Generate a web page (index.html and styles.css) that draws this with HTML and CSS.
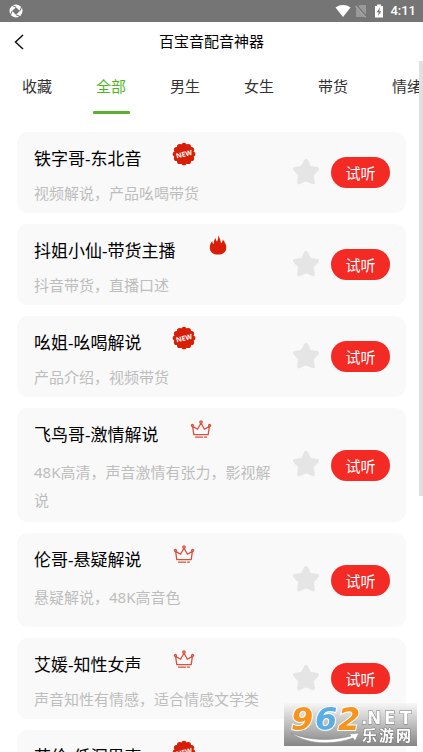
FILE: index.html
```html
<!DOCTYPE html>
<html lang="zh-CN">
<head>
<meta charset="utf-8">
<meta name="viewport" content="width=device-width, initial-scale=1">
<title>百宝音配音神器</title>
<link rel="stylesheet" href="styles.css">
</head>
<body>
<svg class="defs" aria-hidden="true">
  <symbol id="star" viewBox="0 1 28 28"><path d="M14 3 L17.4 9.7 25 11 19.8 16.6 20.8 24.3 14 21.2 7.2 24.3 8.2 16.6 3 11 10.6 9.7Z" fill="#e5e5e5" stroke="#e5e5e5" stroke-width="4" stroke-linejoin="round"/></symbol>
  <symbol id="new" viewBox="0 0 24 24">
    <g fill="#d81e06"><circle cx="12" cy="12" r="10"/><circle cx="12" cy="3.3" r="2.6"/><circle cx="16.4" cy="4.5" r="2.6"/><circle cx="19.5" cy="7.6" r="2.6"/><circle cx="20.7" cy="12" r="2.6"/><circle cx="19.5" cy="16.4" r="2.6"/><circle cx="16.4" cy="19.5" r="2.6"/><circle cx="12" cy="20.7" r="2.6"/><circle cx="7.6" cy="19.5" r="2.6"/><circle cx="4.5" cy="16.4" r="2.6"/><circle cx="3.3" cy="12" r="2.6"/><circle cx="4.5" cy="7.6" r="2.6"/><circle cx="7.6" cy="4.5" r="2.6"/></g>
    <text x="12" y="14.7" transform="rotate(-14 12 12)" text-anchor="middle" class="new-text">NEW</text>
  </symbol>
  <symbol id="fire" viewBox="0 0 24 24"><path d="M12.2 1.5C13.6 4 14.8 6.4 15 9.4 15.9 8.600 16.600 7.100 16.700 5.500 19.100 8 20.300 10.800 20.300 13.400 20.300 18 17 20.500 12 20.500S3.800 18 3.800 13.400C3.800 11 4.700 8.800 6.200 7 6.400 8.500 6.900 9.500 7.700 10.300 7.800 7.500 8.300 5.600 9.400 4.100 9.700 5.600 10.200 6.800 11 7.700 12 5.800 12.400 3.800 12.200 1.500Z" fill="#d81e06"/></symbol>
  <symbol id="crown" viewBox="0 0 24 24"><g fill="none" stroke="#d9503f" stroke-width="1.300" stroke-linecap="round" stroke-linejoin="round"><path d="M4.800 16.600 3.600 8.400 8.600 11.200 12 5 15.400 11.200 20.400 8.400 19.200 16.600Z"/><circle cx="12" cy="4" r="1.200"/><circle cx="3.400" cy="7.400" r="1"/><circle cx="20.600" cy="7.400" r="1"/><path d="M6.500 19.200H13.500M15.500 19.200H17.500"/></g></symbol>
</svg>

<div class="status">
  <svg class="status-app" viewBox="0 0 14 14" aria-hidden="true"><circle cx="7" cy="7" r="6.500" fill="#fff"/><path d="M7 3.200 10.800 7 7 10.800 3.200 7Z" fill="#757575"/><path d="M7 3.200 3 1.500M10.800 7 12.500 3M7 10.800 11 12.500M3.200 7 1.500 11" stroke="#757575" stroke-width="1"/></svg>
  <svg class="status-wifi" viewBox="0 0 16 14" aria-hidden="true"><path d="M8 13 .5 3.500C4.800.200 11.200.200 15.500 3.500Z" fill="#fff"/></svg>
  <svg class="status-sim" viewBox="0 0 12 14" aria-hidden="true"><path d="M4.500 1H11V13H1V4.500Z" fill="#999"/><path d="M1 1.500 11.500 13" stroke="#757575" stroke-width="2.400"/><path d="M.5 2 10.800 13.300" stroke="#aaa" stroke-width="1.200"/></svg>
  <svg class="status-battery" viewBox="0 0 10 14" aria-hidden="true"><path d="M3 .5H7V2H9V13.500H1V2H3Z" fill="#fff"/><path d="M6 3.500 2.600 8.300H4.700L4 12 7.400 7.200H5.300Z" fill="#757575"/></svg>
  <time>4:11</time>
</div>

<header class="header">
  <button class="back" aria-label="返回"><svg viewBox="0 0 12 18" aria-hidden="true"><path d="M10 2 2.500 9 10 16" fill="none" stroke="#111" stroke-width="1.500"/></svg></button>
  <h1>百宝音配音神器</h1>
</header>

<div class="content">
  <nav class="tabs">
    <a href="#">收藏</a>
    <a href="#" class="active" aria-current="page">全部</a>
    <a href="#">男生</a>
    <a href="#">女生</a>
    <a href="#">带货</a>
    <a href="#">情绪</a>
  </nav>

  <main class="list">
    <article class="card">
      <div class="info"><div class="name"><h2>铁字哥-东北音</h2><svg class="badge"><use href="#new"/></svg></div><p>视频解说，产品吆喝带货</p></div>
      <button class="fav" aria-label="收藏"><svg><use href="#star"/></svg></button><button class="listen">试听</button>
    </article>
    <article class="card">
      <div class="info"><div class="name"><h2>抖姐小仙-带货主播</h2><svg class="badge"><use href="#fire"/></svg></div><p>抖音带货，直播口述</p></div>
      <button class="fav" aria-label="收藏"><svg><use href="#star"/></svg></button><button class="listen">试听</button>
    </article>
    <article class="card">
      <div class="info"><div class="name"><h2>吆姐-吆喝解说</h2><svg class="badge"><use href="#new"/></svg></div><p>产品介绍，视频带货</p></div>
      <button class="fav" aria-label="收藏"><svg><use href="#star"/></svg></button><button class="listen">试听</button>
    </article>
    <article class="card tall">
      <div class="info"><div class="name"><h2>飞鸟哥-激情解说</h2><svg class="badge"><use href="#crown"/></svg></div><p>48K高清，声音激情有张力，影视解说</p></div>
      <button class="fav" aria-label="收藏"><svg><use href="#star"/></svg></button><button class="listen">试听</button>
    </article>
    <article class="card tall">
      <div class="info"><div class="name"><h2>伦哥-悬疑解说</h2><svg class="badge"><use href="#crown"/></svg></div><p>悬疑解说，48K高音色</p></div>
      <button class="fav" aria-label="收藏"><svg><use href="#star"/></svg></button><button class="listen">试听</button>
    </article>
    <article class="card">
      <div class="info"><div class="name"><h2>艾媛-知性女声</h2><svg class="badge"><use href="#crown"/></svg></div><p>声音知性有情感，适合情感文学类</p></div>
      <button class="fav" aria-label="收藏"><svg><use href="#star"/></svg></button><button class="listen">试听</button>
    </article>
    <article class="card">
      <div class="info"><div class="name"><h2>艾伦-低沉男声</h2><svg class="badge"><use href="#new"/></svg></div><p>低沉男声</p></div>
      <button class="fav" aria-label="收藏"><svg><use href="#star"/></svg></button><button class="listen">试听</button>
    </article>
  </main>
  <div class="scrollbar"></div>
</div>

<div class="mark">
  <svg viewBox="0 0 133 43" role="img" aria-label="962.NET 乐游网">
    <g class="mark-num"><text x="7" y="27" fill="#f7941d">9</text><text x="31" y="27" fill="#5aaee6">6</text><text x="54" y="27" fill="#f7941d">2</text></g>
    <path d="M7 30C25 38 47 38 67 33L65 31 75 30 71 38 69 35C47 43 22 41 7 30Z" fill="#fff" stroke="#888" stroke-width=".6"/>
    <text class="mark-net" y="21"><tspan x="77">.</tspan><tspan x="83">N</tspan><tspan x="100">E</tspan><tspan x="116">T</tspan></text>
    <text class="mark-cn" y="38"><tspan x="78">乐</tspan><tspan x="95">游</tspan><tspan x="112">网</tspan></text>
  </svg>
</div>
</body>
</html>
```
FILE: styles.css
```css
* { box-sizing: border-box; }

body {
  margin: 0;
  height: 100vh;
  display: flex;
  flex-direction: column;
  overflow: hidden;
  background: #fff;
  color: #000;
  font-family: "Noto Sans", "Noto Sans CJK SC", sans-serif;
}

h1, h2, p { margin: 0; font-weight: 400; }
svg { display: block; }
button { border: 0; padding: 0; background: none; font-family: inherit; cursor: pointer; }

.defs { position: absolute; width: 0; height: 0; }

.status {
  flex: none;
  display: flex;
  align-items: center;
  height: 22px;
  padding: 0 7px 0 9px;
  background: #757575;
  color: #fff;
}
.status time { font: 500 13px/22px Roboto, sans-serif; margin-left: 6px; }
.status-app { width: 14px; height: 14px; margin-right: auto; }
.status-wifi { width: 16px; height: 14px; }
.status-sim { width: 12px; height: 14px; margin-left: 4px; }
.status-battery { width: 10px; height: 14px; margin-left: 7px; }

.header {
  flex: none;
  display: grid;
  grid-template-columns: 40px 1fr 40px;
  align-items: center;
  height: 39px;
}
.back { padding-left: 13px; }
.back svg { width: 12px; height: 18px; }
.header h1 { text-align: center; font-size: 15px; line-height: 39px; }

.content { position: relative; flex: 1; min-height: 0; overflow: hidden; }

.tabs { display: flex; height: 53px; overflow: hidden; }
.tabs a {
  flex: none;
  display: flex;
  flex-direction: column;
  align-items: center;
  width: 74px;
  color: #333;
  font-size: 15px;
  line-height: 50px;
  text-decoration: none;
}
.tabs .active { color: #4fb51f; }
.tabs .active::after { content: ""; width: 37px; height: 3px; border-radius: 1px; background: #5ab030; }

.list { display: flex; flex-direction: column; gap: 11px; padding: 18px 17px; }
.card {
  display: flex;
  align-items: center;
  min-height: 81px;
  padding: 0 16px 0 17px;
  border-radius: 11px;
  background: #f9f9f9;
}
.info { flex: 1; align-self: flex-start; padding: 14px 10px 8px 0; }
.name { display: flex; align-items: flex-start; gap: 31px; }
.name h2 { font-size: 17px; line-height: 26px; }
.badge { width: 24px; height: 24px; margin-top: -4px; }
.new-text { font: 700 7px "Open Sans", sans-serif; fill: #fff; }
.info p { margin-top: 10px; color: #bdbdbd; font-size: 15px; line-height: 22px; }
.tall { min-height: 94px; }
.tall p { line-height: 28px; }

.fav svg { width: 28px; height: 28px; }
.listen {
  width: 59px;
  height: 31px;
  margin-left: 11px;
  border-radius: 16px;
  background: #f42a25;
  color: #fff;
  font-size: 15px;
}

.scrollbar { position: absolute; top: 0; right: 0; width: 4px; height: 63%; background: #e0e0e0; }

.mark {
  position: fixed;
  right: 6px;
  bottom: 6px;
  width: 133px;
  background: linear-gradient(rgba(245, 245, 245, .7), #858585);
}
.mark-num { font: italic 700 32px "DejaVu Sans", sans-serif; stroke: #fff; stroke-width: 2px; paint-order: stroke; }
.mark-net { font: 700 17px "DejaVu Sans", sans-serif; fill: #fff; stroke: #777; stroke-width: 1px; paint-order: stroke; }
.mark-cn { font: 700 15px "Noto Sans CJK SC", sans-serif; fill: #fff; stroke: #777; stroke-width: 1px; paint-order: stroke; }
```
